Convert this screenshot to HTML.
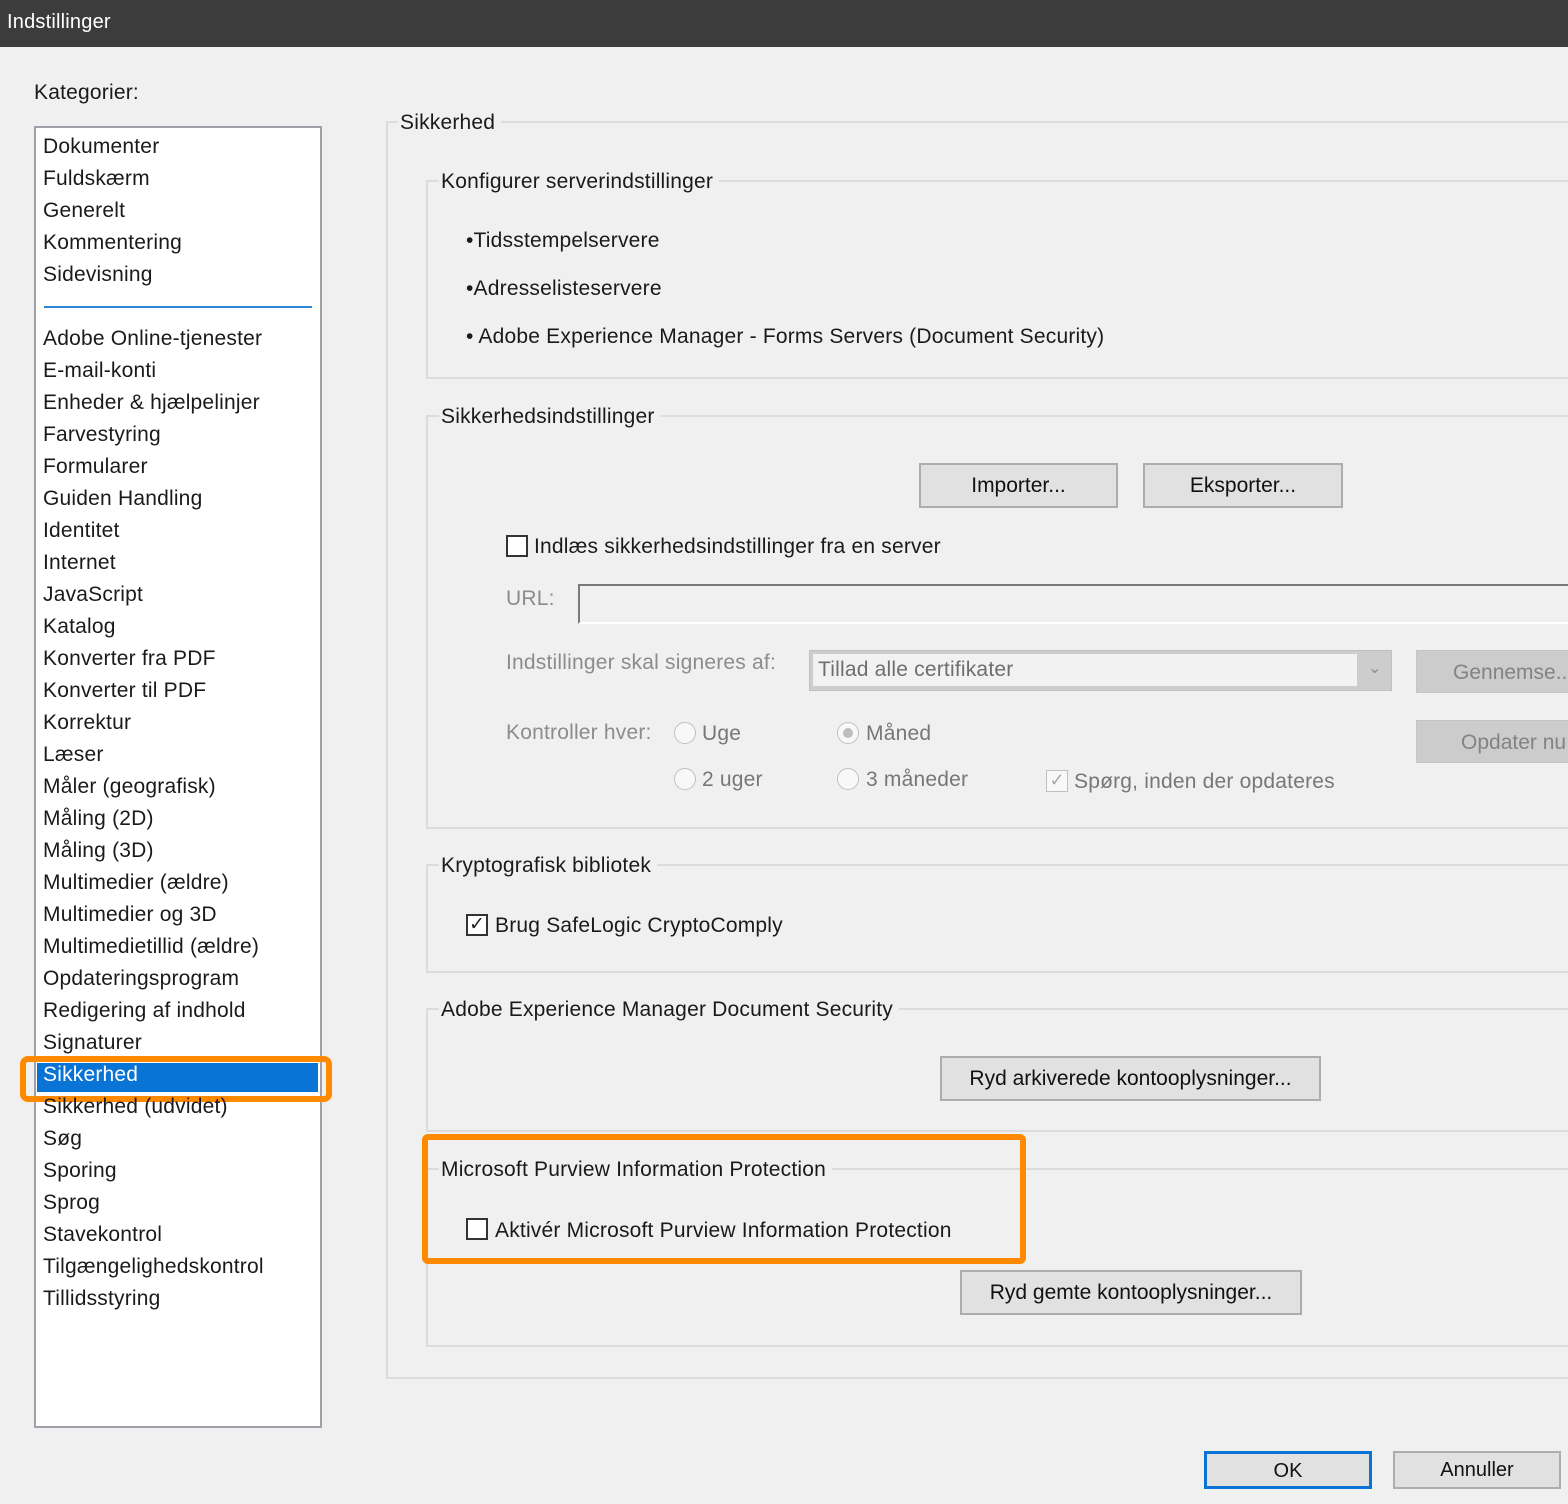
<!DOCTYPE html>
<html><head><meta charset="utf-8"><style>
*{margin:0;padding:0;box-sizing:border-box}
body{width:1568px;height:1504px;background:#f0f0f0;position:relative;overflow:hidden;font-family:"Liberation Sans",sans-serif;color:#1a1a1a}
.t{position:absolute;font-size:21px;letter-spacing:.2px;line-height:24px;white-space:nowrap;margin-top:1px}
.d{color:#8c8c8c}
.fr{position:absolute;border:2px solid #dcdcdc;border-right:none}
.lg{position:absolute;background:#f0f0f0;font-size:21px;letter-spacing:.2px;line-height:24px;padding:0 6px 0 2px;white-space:nowrap;margin-top:1px}
.btn{position:absolute;background:#e1e1e1;border:2px solid #adadad;font-size:21px;text-align:center;color:#111}
.dbtn{position:absolute;background:#cccccc;border:1px solid #c4c4c4;font-size:21px;text-align:center;color:#838383}
.cb{position:absolute;width:22px;height:22px;border:2px solid #333;background:#fff}
.rb{position:absolute;width:22px;height:22px;border:1.5px solid #c0c0c0;border-radius:50%;background:#f8f8f8}
</style></head><body>
<div style="position:absolute;left:0;top:0;width:1568px;height:47px;background:#3c3c3c"></div>
<div class="t" style="left:7px;top:9px;color:#fff;font-size:20px">Indstillinger</div>
<div class="t" style="left:34px;top:80px">Kategorier:</div>

<div style="position:absolute;left:34px;top:126px;width:288px;height:1302px;background:#fff;border:2px solid #a0a0a8"></div>
<div style="position:absolute;left:44px;top:306px;width:268px;height:2px;background:#2b86d8"></div>
<div style="position:absolute;left:37px;top:1063px;width:281px;height:29px;background:#0a74d6"></div>
<div style="position:absolute;left:20px;top:1056px;width:312px;height:46px;border:6px solid #ff8a00;border-radius:8px"></div>
<div id="list"></div>

<div class="fr" style="left:386px;top:121px;width:1200px;height:1258px"></div>
<div class="lg" style="left:398px;top:110px">Sikkerhed</div>

<div class="fr" style="left:426px;top:180px;width:1160px;height:199px"></div>
<div class="lg" style="left:439px;top:169px">Konfigurer serverindstillinger</div>
<div class="t" style="left:466px;top:228px">•Tidsstempelservere</div>
<div class="t" style="left:466px;top:276px">•Adresselisteservere</div>
<div class="t" style="left:466px;top:324px">• Adobe Experience Manager - Forms Servers (Document Security)</div>

<div class="fr" style="left:426px;top:415px;width:1160px;height:414px"></div>
<div class="lg" style="left:439px;top:404px">Sikkerhedsindstillinger</div>
<div class="btn" style="left:919px;top:463px;width:199px;height:45px;line-height:41px">Importer...</div>
<div class="btn" style="left:1143px;top:463px;width:200px;height:45px;line-height:41px">Eksporter...</div>
<div class="cb" style="left:506px;top:535px"></div>
<div class="t" style="left:534px;top:534px">Indlæs sikkerhedsindstillinger fra en server</div>
<div class="t d" style="left:506px;top:586px">URL:</div>
<div style="position:absolute;left:578px;top:584px;width:1000px;height:40px;border-top:2px solid #7a7a7a;border-left:2px solid #7a7a7a;border-bottom:2px solid #fff;background:#f0f0f0"></div>
<div class="t d" style="left:506px;top:650px">Indstillinger skal signeres af:</div>
<div style="position:absolute;left:809px;top:650px;width:583px;height:41px;background:#cdcdcd;border:1px solid #c0c0c0"></div>
<div style="position:absolute;left:813px;top:654px;width:544px;height:32px;background:#f2f2f2"></div>
<div class="t" style="left:818px;top:657px;color:#6e6e6e">Tillad alle certifikater</div>
<div class="t d" style="left:1368px;top:656px;font-size:16px">⌄</div>
<div class="dbtn" style="left:1416px;top:650px;width:170px;height:43px;line-height:43px;text-align:left;padding-left:36px">Gennemse...</div>
<div class="dbtn" style="left:1416px;top:720px;width:170px;height:43px;line-height:43px;text-align:left;padding-left:44px">Opdater nu</div>
<div class="t d" style="left:506px;top:720px">Kontroller hver:</div>
<div class="rb" style="left:674px;top:722px"></div>
<div class="t d" style="left:702px;top:721px;color:#777">Uge</div>
<div class="rb" style="left:837px;top:722px"></div>
<div style="position:absolute;left:843px;top:728px;width:10px;height:10px;border-radius:50%;background:#bdbdbd"></div>
<div class="t d" style="left:866px;top:721px;color:#777">Måned</div>
<div class="rb" style="left:674px;top:768px"></div>
<div class="t d" style="left:702px;top:767px;color:#777">2 uger</div>
<div class="rb" style="left:837px;top:768px"></div>
<div class="t d" style="left:866px;top:767px;color:#777">3 måneder</div>
<div style="position:absolute;left:1046px;top:770px;width:22px;height:22px;border:1.5px solid #c0c0c0;background:#f8f8f8;color:#aaa;font-size:18px;line-height:19px;text-align:center">✓</div>
<div class="t d" style="left:1074px;top:769px;color:#777">Spørg, inden der opdateres</div>

<div class="fr" style="left:426px;top:864px;width:1160px;height:109px"></div>
<div class="lg" style="left:439px;top:853px">Kryptografisk bibliotek</div>
<div class="cb" style="left:466px;top:914px;color:#222;font-size:19px;line-height:18px;text-align:center">✓</div>
<div class="t" style="left:495px;top:913px">Brug SafeLogic CryptoComply</div>

<div class="fr" style="left:426px;top:1008px;width:1160px;height:124px"></div>
<div class="lg" style="left:439px;top:997px">Adobe Experience Manager Document Security</div>
<div class="btn" style="left:940px;top:1056px;width:381px;height:45px;line-height:41px">Ryd arkiverede kontooplysninger...</div>

<div class="fr" style="left:426px;top:1168px;width:1160px;height:179px"></div>
<div class="lg" style="left:439px;top:1157px">Microsoft Purview Information Protection</div>
<div class="cb" style="left:466px;top:1218px"></div>
<div class="t" style="left:495px;top:1218px">Aktivér Microsoft Purview Information Protection</div>
<div style="position:absolute;left:422px;top:1134px;width:604px;height:130px;border:6px solid #ff8a00;border-radius:6px"></div>
<div class="btn" style="left:960px;top:1270px;width:342px;height:45px;line-height:41px">Ryd gemte kontooplysninger...</div>

<div class="btn" style="left:1204px;top:1451px;width:168px;height:38px;line-height:34px;border-color:#0a74d6;border-width:3px;font-size:20px">OK</div>
<div class="btn" style="left:1393px;top:1451px;width:168px;height:38px;line-height:34px;font-size:20px">Annuller</div>

<script>
var a=["Dokumenter","Fuldskærm","Generelt","Kommentering","Sidevisning"],b=["Adobe Online-tjenester","E-mail-konti","Enheder & hjælpelinjer","Farvestyring","Formularer","Guiden Handling","Identitet","Internet","JavaScript","Katalog","Konverter fra PDF","Konverter til PDF","Korrektur","Læser","Måler (geografisk)","Måling (2D)","Måling (3D)","Multimedier (ældre)","Multimedier og 3D","Multimedietillid (ældre)","Opdateringsprogram","Redigering af indhold","Signaturer","Sikkerhed","Sikkerhed (udvidet)","Søg","Sporing","Sprog","Stavekontrol","Tilgængelighedskontrol","Tillidsstyring"];
var h="";a.forEach(function(s,i){h+='<div class="t" style="left:43px;top:'+(134+i*32)+'px">'+s.replace("&","&amp;")+'</div>'});
b.forEach(function(s,i){h+='<div class="t" style="left:43px;top:'+(326+i*32)+'px'+(s=="Sikkerhed"?';color:#fff':'')+'">'+s.replace("&","&amp;")+'</div>'});
document.getElementById("list").outerHTML=h;
</script>
</body></html>
